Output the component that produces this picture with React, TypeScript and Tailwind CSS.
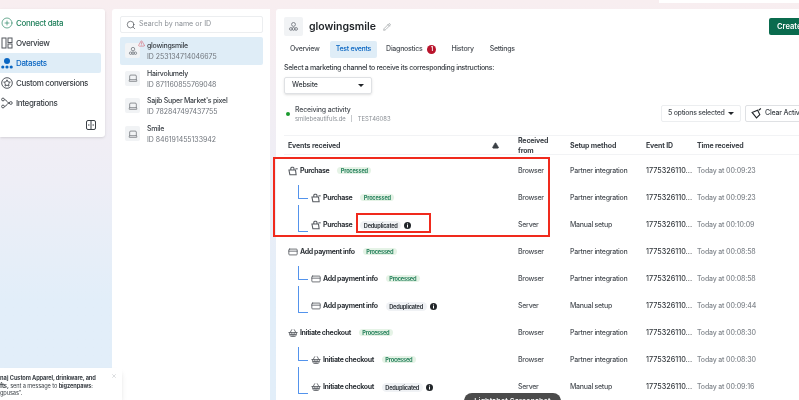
import React from "react";
import { Search, Pencil, CirclePlus, X, TriangleAlert, CreditCard, ShoppingBasket, Laptop } from "lucide-react";

const Dataset = ({ s = 10 }: { s?: number }) => (
  <svg width={s} height={s} viewBox="0 0 16 16" fill="none" stroke="#6b7078" strokeWidth="1.2">
    <circle cx="8" cy="5" r="2.8" />
    <circle cx="4.2" cy="11.5" r="2" />
    <circle cx="8" cy="11.5" r="2" />
    <circle cx="11.8" cy="11.5" r="2" />
  </svg>
);

const Bag = () => (
  <svg width="10" height="10" viewBox="0 0 16 16" fill="none" stroke="#55595f" strokeWidth="1.7" className="shrink-0">
    <path d="M1.5 6.5h10.5l1 7.5H3z" />
    <path d="M4.5 6.5V3.5A2 2 0 0 1 6.5 2h1.5a2 2 0 0 1 1.5 1.5V6.5" />
    <path d="M12 4.5h3.5" />
  </svg>
);

const InfoDot = () => (
  <svg width="7" height="7" viewBox="0 0 14 14" className="shrink-0">
    <circle cx="7" cy="7" r="7" fill="#22262a" />
    <rect x="6" y="6" width="2" height="5" fill="#fff" />
    <rect x="6" y="3" width="2" height="2" fill="#fff" />
  </svg>
);

const Card = () => <CreditCard size={10} strokeWidth={2} color="#55595f" className="shrink-0" />;
const Basket = () => <ShoppingBasket size={10} strokeWidth={2} color="#55595f" className="shrink-0" />;

const NavItem = ({ icon, label, active, green }: { icon: React.ReactNode; label: string; active?: boolean; green?: boolean }) => (
  <div className={`flex h-5 items-center gap-[3px] rounded-r-[2px] pl-[1px] text-[8px] font-medium tracking-[-0.35px] ${active ? "bg-[#dfedf7] text-[#0a66c2]" : green ? "text-[#21805c]" : "text-[#3b4046]"}`}>
    <span className="flex w-3 justify-center">{icon}</span>
    {label}
  </div>
);

const Row = ({ name, id, selected }: { name: string; id: string; selected?: boolean }) => (
  <div className={`flex h-[27.6px] items-center gap-[7px] rounded-[2px] pl-[5px] ${selected ? "bg-[#dfedf7]" : ""}`}>
    <div className="relative flex h-[15px] w-[15px] items-center justify-center rounded-[2px] bg-[#f1f3f5]">
      {selected ? <Dataset /> : <Laptop size={10} strokeWidth={1.5} color="#555a60" />}
      {selected && <TriangleAlert size={7} color="#d96470" className="absolute -right-[5px] -top-[3px]" />}
    </div>
    <div className="pt-[1px] leading-[11px]">
      <div className="text-[7px] font-medium tracking-[-0.25px] text-[#3b4046]">{name}</div>
      <div className="text-[7px] tracking-[-0.05px] text-[#6f747b]">{id}</div>
    </div>
  </div>
);

const Badge = ({ dedupe }: { dedupe?: boolean }) =>
  dedupe ? (
    <span className="flex items-center gap-[3px]">
      <span className="rounded-full bg-[#f0f2f5] px-[3.5px] text-[5.7px] font-bold leading-[9px] text-[#3b4046]">Deduplicated</span>
      <InfoDot />
    </span>
  ) : (
    <span className="rounded-full bg-[#e5f3e6] px-[3.5px] text-[5.7px] font-bold leading-[9px] text-[#2c8560]">Processed</span>
  );

type Ev = { name: string; icon: React.ReactNode; child?: 1 | 2; dedupe?: boolean; from: string; setup: string; time: string };

const EventRow = ({ e }: { e: Ev }) => (
  <div className="grid h-[27px] grid-cols-[230px_52px_76px_51px_1fr] items-center text-[7px] font-medium tracking-[-0.27px] text-[#4a4f55]">
    <div className="flex items-center">
      {e.child && (
        <div className={`-mt-[13px] ml-[10px] mr-[3px] w-[10px] rounded-bl-[1px] border-b-[1.3px] border-l-[1.3px] border-[#5393ec] ${e.child === 1 ? "h-[14px]" : "h-[27px]"}`} />
      )}
      <div className="flex items-center gap-[2px]">
        {e.icon}
        <span className="text-[7px] font-bold tracking-[-0.36px] text-[#30353a]">{e.name}</span>
      </div>
      <div className="ml-[8px]"><Badge dedupe={e.dedupe} /></div>
    </div>
    <div>{e.from}</div>
    <div>{e.setup}</div>
    <div className="text-[7.2px] tracking-normal text-[#33383d]">1775326110...</div>
    <div className="tracking-[-0.17px] text-[#83888e]">{e.time}</div>
  </div>
);

const P = "Partner integration";
const M = "Manual setup";
const events: Ev[] = [
  { name: "Purchase", icon: <Bag />, from: "Browser", setup: P, time: "Today at 00:09:23" },
  { name: "Purchase", icon: <Bag />, child: 1, from: "Browser", setup: P, time: "Today at 00:09:23" },
  { name: "Purchase", icon: <Bag />, child: 2, dedupe: true, from: "Server", setup: M, time: "Today at 00:10:09" },
  { name: "Add payment info", icon: <Card />, from: "Browser", setup: P, time: "Today at 00:08:58" },
  { name: "Add payment info", icon: <Card />, child: 1, from: "Browser", setup: P, time: "Today at 00:08:58" },
  { name: "Add payment info", icon: <Card />, child: 2, dedupe: true, from: "Server", setup: M, time: "Today at 00:09:44" },
  { name: "Initiate checkout", icon: <Basket />, from: "Browser", setup: P, time: "Today at 00:08:30" },
  { name: "Initiate checkout", icon: <Basket />, child: 1, from: "Browser", setup: P, time: "Today at 00:08:30" },
  { name: "Initiate checkout", icon: <Basket />, child: 2, dedupe: true, from: "Server", setup: M, time: "Today at 00:09:16" },
];

export default function App() {
  return (
    <div className="relative h-[400px] w-[799px] overflow-hidden bg-gradient-to-b from-[#f8eef0] via-[#eeeef6] via-45% to-[#e2eef9] to-75% font-['Inter',sans-serif] blur-[0.4px]">
      <div className="absolute right-0 top-0 h-[3px] w-[140px] bg-white" />
      <div className="flex h-full pt-[9px]">
        {/* nav */}
        <div className="h-[128px] w-[105px] shrink-0 rounded-r-[3px] bg-white pr-[4px] pt-[4px] shadow-sm">
          <NavItem green label="Connect data" icon={<CirclePlus size={12} strokeWidth={1.3} color="#21805c" />} />
          <NavItem
            label="Overview"
            icon={
              <svg width="12" height="12" viewBox="0 0 12 12" fill="none" stroke="#55595f">
                <rect x="1" y="1" width="4" height="10" />
                <rect x="7" y="1" width="4" height="4.5" />
                <rect x="7" y="7" width="4" height="4" />
              </svg>
            }
          />
          <NavItem
            active
            label="Datasets"
            icon={
              <svg width="12" height="12" viewBox="0 0 12 12" fill="#0a66c2">
                <circle cx="6" cy="4" r="3" />
                <circle cx="1.8" cy="10" r="1.6" />
                <circle cx="6" cy="10" r="1.6" />
                <circle cx="10.2" cy="10" r="1.6" />
              </svg>
            }
          />
          <NavItem
            label="Custom conversions"
            icon={
              <svg width="12" height="12" viewBox="0 0 12 12" fill="none" stroke="#55595f">
                <circle cx="6" cy="6" r="5.3" />
                <path d="M6 2.8l1 2.1 2.3.3-1.7 1.6.4 2.3L6 8.1 4 9.1l.4-2.3-1.7-1.6L5 4.9z" />
              </svg>
            }
          />
          <NavItem
            label="Integrations"
            icon={
              <svg width="12" height="12" viewBox="0 0 12 12" fill="none" stroke="#55595f">
                <circle cx="2" cy="2.5" r="1.4" />
                <circle cx="2" cy="9.5" r="1.4" />
                <circle cx="9.8" cy="6" r="1.4" />
                <path d="M3.4 2.5C6 2.5 5.5 6 8.4 6M3.4 9.5C6 9.5 5.5 6 8.4 6" />
              </svg>
            }
          />
          <div className="mt-[7px] flex justify-end pr-[5px]">
            <svg width="10" height="10" viewBox="0 0 10 10" fill="none" stroke="#3b4046">
              <rect x=".5" y=".5" width="9" height="9" rx="1.5" />
              <path d="M5 .5v9" />
              <path d="M2 5h1.5M6.5 5H8" strokeWidth="1.2" />
            </svg>
          </div>
        </div>
        {/* list */}
        <div className="ml-[7px] w-[158px] shrink-0 rounded-tl-[3px] bg-white pl-[8px] pr-[7px] pt-[7px]">
          <div className="flex h-[17px] items-center gap-[3px] rounded-[2px] border border-[#eceef0] pl-[5px] text-[7.1px] text-[#8b9096]">
            <Search size={10} strokeWidth={1.5} color="#3b4046" />
            Search by name or ID
          </div>
          <div className="mt-[4px]">
            <Row selected name="glowingsmile" id="ID 253134714046675" />
            <Row name="Hairvolumely" id="ID 871160855769048" />
            <Row name="Sajib Super Market's pixel" id="ID 782847497437755" />
            <Row name="Smile" id="ID 846191455133942" />
          </div>
        </div>
        {/* main */}
        <div className="relative ml-[6px] min-w-0 flex-1 rounded-tl-[3px] bg-white pt-[8px]">
          <div className="flex items-center pl-[8px]">
            <div className="flex h-[19px] w-[19px] items-center justify-center rounded-[2px] bg-[#f1f3f5]"><Dataset s={11} /></div>
            <span className="ml-[6px] text-[10.5px] font-semibold text-[#22262a]">glowingsmile</span>
            <Pencil size={8} strokeWidth={1.4} color="#666b71" className="ml-[7px]" />
            <div className="ml-auto -mr-[10px] flex h-[17px] w-[40px] items-center rounded-[2px] bg-[#0a6b4e] pl-[8px] text-[7.6px] font-semibold text-white">Create</div>
          </div>
          <div className="mt-[5px] flex items-center pl-[8px] text-[7px] font-medium tracking-[-0.27px] text-[#4a4f55]">
            <span className="px-[6px]">Overview</span>
            <span className="ml-[4px] flex h-[17px] items-center rounded-[2px] bg-[#dfedf7] px-[6px] text-[#0a66c2]">Test events</span>
            <span className="ml-[9px] flex items-center gap-[5px]">Diagnostics
              <span className="flex h-[9px] w-[9px] items-center justify-center rounded-full bg-[#b9142c] text-[5.5px] font-bold text-white">1</span>
            </span>
            <span className="ml-[15px]">History</span>
            <span className="ml-[16px]">Settings</span>
          </div>
          <div className="mt-[5px] pl-[8px] text-[7px] font-medium leading-[10px] tracking-[-0.28px] text-[#3b4046]">Select a marketing channel to receive its corresponding instructions:</div>
          <div className="ml-[8px] mt-[4px] flex h-[17px] w-[88px] items-center justify-between rounded-[2px] border border-[#dfe1e4] px-[7px] text-[7px] font-medium tracking-[-0.2px] text-[#3b4046] shadow-sm">
            Website
            <span className="h-0 w-0 border-x-[3px] border-t-[3px] border-x-transparent border-t-[#22262a]" />
          </div>
          <div className="mt-[11px] flex h-[17px] items-center pl-[10px]">
            <span className="h-[4px] w-[4px] rounded-full bg-[#1a9a2e]" />
            <div className="ml-[5px] leading-[9px]">
              <div className="text-[7px] font-medium tracking-[-0.2px] text-[#4a4f55]">Receiving activity</div>
              <div className="text-[5.9px] text-[#8b9096]">smilebeautifuls.de &nbsp;&nbsp;|&nbsp;&nbsp; TEST46083</div>
            </div>
            <div className="-mr-[16px] ml-auto flex items-center gap-[4px]">
              <div className="flex h-[17px] w-[80px] items-center justify-between whitespace-nowrap rounded-[2px] border border-[#eceef0] px-[6px] text-[7px] font-medium tracking-[-0.27px] text-[#4a4f55]">
                5 options selected
                <span className="h-0 w-0 border-x-[3px] border-t-[3px] border-x-transparent border-t-[#22262a]" />
              </div>
              <div className="flex h-[17px] w-[70px] items-center gap-[3px] whitespace-nowrap rounded-[2px] border border-[#dfe1e4] pl-[5px] text-[7px] font-medium tracking-[-0.2px] text-[#3b4046]">
                <svg width="11" height="11" viewBox="0 0 10 10" fill="none" stroke="#22262a" className="shrink-0">
                  <path d="M1 4l5-2 2 4-3 3zM7 2l2-1.5" />
                </svg>
                Clear Activity
              </div>
            </div>
          </div>
          <div className="ml-[8px] mt-[13px] grid h-[20px] grid-cols-[230px_52px_76px_51px_1fr] items-center border-y border-[#f2f3f5] pl-[4px] text-[7px] font-bold leading-[9.5px] tracking-[-0.15px] text-[#3b4046]">
            <div className="flex items-center justify-between pr-[19px]">Events received<TriangleAlert size={7} fill="#3b4046" color="#3b4046" /></div>
            <div>Received<br />from</div>
            <div>Setup method</div>
            <div>Event ID</div>
            <div>Time received</div>
          </div>
          <div className="mt-[2.5px] pl-[12px]">
            {events.map((e, i) => <EventRow key={i} e={e} />)}
          </div>
          {/* annotations */}
          <div className="absolute left-[-3px] top-[147.5px] h-[80px] w-[277px] border-2 border-[#f02a1d]" />
          <div className="absolute left-[80px] top-[204px] h-[20px] w-[75px] border-2 border-[#f02a1d]" />
        </div>
      </div>
      {/* toast */}
      <div className="absolute bottom-0 left-0 h-[32px] w-[122px] rounded-tr-[3px] bg-white pt-[6px] text-[5.7px] leading-[7.7px] tracking-[-0.12px] text-[#3b4046] shadow-md">
        <div className="whitespace-nowrap font-bold">na] Custom Apparel, drinkware, and</div>
        <div className="whitespace-nowrap"><b>fts,</b> sent a message to <b>bigzenpaws</b>:</div>
        <div className="whitespace-nowrap">gpusas".</div>
        <X size={6} color="#b8bcc0" className="absolute right-[5px] top-[5px]" />
      </div>
      {/* capture pill */}
      <div className="absolute bottom-[-8px] left-[464px] flex h-[15px] w-[97px] justify-center rounded-t-[8px] bg-[#4b4b4b] pt-[3px] text-[7.5px] font-medium text-white">Lightshot Screenshot</div>
    </div>
  );
}
